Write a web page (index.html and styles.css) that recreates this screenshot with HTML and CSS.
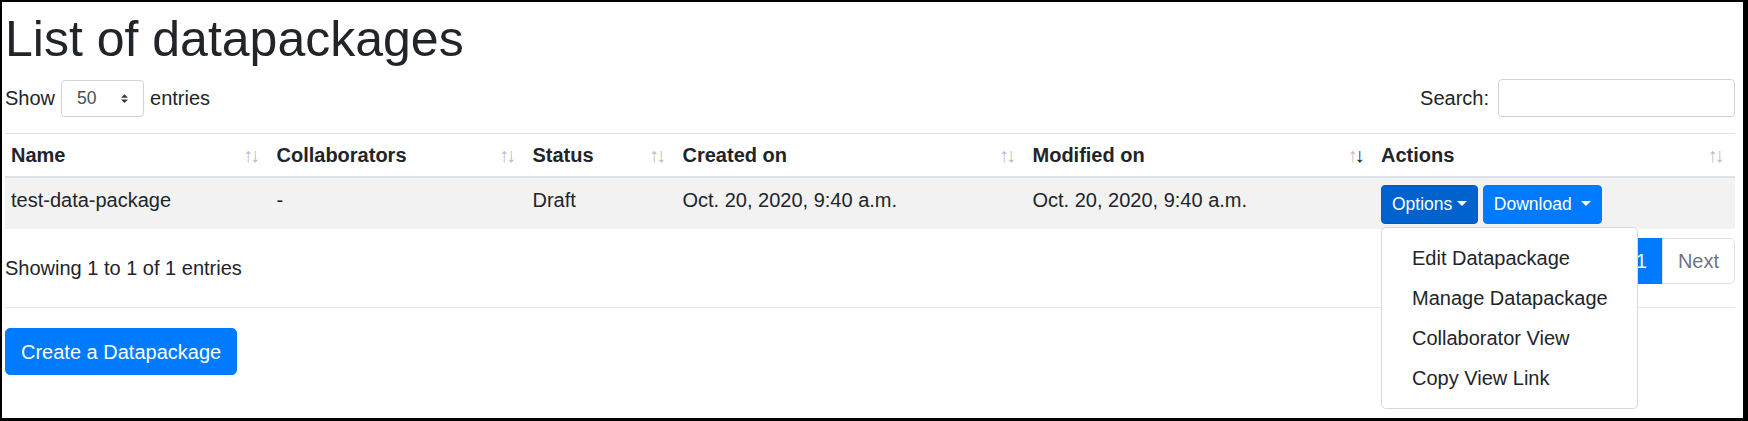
FILE: index.html
```html
<!DOCTYPE html>
<html lang="en">
<head>
<meta charset="utf-8">
<title>List of datapackages</title>
<link rel="stylesheet" href="styles.css">
</head>
<body>
<div class="frame">
  <h1 class="title">List of datapackages</h1>
  <div class="toolbar">
    <div class="length">
      <span>Show</span>
      <span class="select"><span>50</span><svg class="select-icon" width="7" height="9" viewBox="0 0 4 5"><path d="M2 0L0 2h4zm0 5L0 3h4z" fill="#343a40"/></svg></span>
      <span>entries</span>
    </div>
    <div class="filter">
      <span>Search:</span>
      <span class="search"></span>
    </div>
  </div>
  <table class="dt">
    <colgroup>
      <col class="c-name"><col class="c-collab"><col class="c-status"><col class="c-created"><col class="c-modified"><col class="c-actions">
    </colgroup>
    <thead>
      <tr>
        <th><div class="th"><span>Name</span><span class="sort"><span>↑</span><span>↓</span></span></div></th>
        <th><div class="th"><span>Collaborators</span><span class="sort"><span>↑</span><span>↓</span></span></div></th>
        <th><div class="th"><span>Status</span><span class="sort"><span>↑</span><span>↓</span></span></div></th>
        <th><div class="th"><span>Created on</span><span class="sort"><span>↑</span><span>↓</span></span></div></th>
        <th><div class="th"><span>Modified on</span><span class="sort"><span>↑</span><span class="on">↓</span></span></div></th>
        <th><div class="th"><span>Actions</span><span class="sort"><span>↑</span><span>↓</span></span></div></th>
      </tr>
    </thead>
    <tbody>
      <tr>
        <td>test-data-package</td>
        <td>-</td>
        <td>Draft</td>
        <td>Oct. 20, 2020, 9:40 a.m.</td>
        <td>Oct. 20, 2020, 9:40 a.m.</td>
        <td>
          <div class="actions">
            <div class="btn-group">
              <button class="btn btn-sm btn-active">Options<span class="caret"></span></button>
              <div class="menu">
                <a class="menu-item">Edit Datapackage</a>
                <a class="menu-item">Manage Datapackage</a>
                <a class="menu-item">Collaborator View</a>
                <a class="menu-item">Copy View Link</a>
              </div>
            </div>
            <button class="btn btn-sm">Download <span class="caret"></span></button>
          </div>
        </td>
      </tr>
    </tbody>
  </table>
  <div class="footer">
    <div class="info">Showing 1 to 1 of 1 entries</div>
    <ul class="pagination">
      <li class="page-item first disabled"><a class="page-link">Previous</a></li>
      <li class="page-item active"><a class="page-link">1</a></li>
      <li class="page-item last disabled"><a class="page-link">Next</a></li>
    </ul>
  </div>
  <hr class="sep">
  <button class="btn btn-create">Create a Datapackage</button>
</div>
</body>
</html>
```

FILE: styles.css
```css
* { box-sizing: border-box; }
html, body { margin: 0; padding: 0; background: #fff; }
body {
  font-family: "Liberation Sans", Arial, sans-serif;
  font-size: 20px;
  line-height: 30px;
  color: #212529;
}
.frame {
  width: 1748px;
  height: 421px;
  border-style: solid;
  border-color: #000;
  border-width: 2px 5px 3px 2px;
  padding: 7px 8px 0 3px;
  overflow: hidden;
}
.title {
  margin: 0 0 10px;
  font-size: 50px;
  line-height: 60px;
  font-weight: 500;
}
.toolbar {
  display: flex;
  justify-content: space-between;
  align-items: center;
  height: 38px;
  margin: 0 0 16px;
}
.length, .filter { display: flex; align-items: center; }
.select {
  display: flex;
  align-items: center;
  justify-content: space-between;
  width: 83px;
  height: 37px;
  margin: 0 6px;
  padding: 0 15px 0 15px;
  border: 1px solid #ced4da;
  border-radius: 4px;
  font-size: 17.5px;
  color: #495057;
}
.search {
  width: 237px;
  height: 38px;
  margin-left: 9px;
  border: 1px solid #ced4da;
  border-radius: 4px;
}
.dt {
  width: 100%;
  table-layout: fixed;
  border-collapse: separate;
  border-spacing: 0;
}
.c-name { width: 265.5px; }
.c-collab { width: 256px; }
.c-status { width: 150px; }
.c-created { width: 350px; }
.c-modified { width: 348.5px; }
.c-actions { width: 360px; }
.dt th {
  padding: 6px 12px 6px 6px;
  border-top: 1px solid #dee2e6;
  border-bottom: 2px solid #dee2e6;
  text-align: left;
  font-weight: bold;
  vertical-align: bottom;
}
.th {
  display: flex;
  justify-content: space-between;
  align-items: baseline;
}
.sort { display: flex; font-weight: normal; }
.sort span {
  display: flex;
  justify-content: center;
  width: 7px;
  opacity: .3;
}
.sort .on { opacity: 1; }
.dt td {
  padding: 7px 6px 5px;
  background: #f2f2f2;
  vertical-align: top;
}
.actions { display: flex; gap: 5px; align-items: flex-start; }
.btn-group { position: relative; display: flex; }
.btn {
  display: inline-block;
  font-family: inherit;
  color: #fff;
  background: #007bff;
  border: 1px solid #007bff;
  cursor: pointer;
}
.btn-sm {
  font-size: 17.5px;
  line-height: 27px;
  padding: 5px 10px;
  border-radius: 4px;
}
.btn-active { background: #0062cc; border-color: #005cbf; }
.caret {
  display: inline-block;
  margin-left: 4.5px;
  vertical-align: 4.5px;
  border-top: 5.25px solid #fff;
  border-left: 5.25px solid transparent;
  border-right: 5.25px solid transparent;
}
.menu {
  position: absolute;
  top: 100%;
  left: 0;
  z-index: 1000;
  margin-top: 2.5px;
  width: 257px;
  padding: 10px 0;
  background: #fff;
  border: 1px solid rgba(0,0,0,.15);
  border-radius: 5px;
}
.menu-item {
  display: block;
  padding: 5px 30px;
  line-height: 30px;
  white-space: nowrap;
  color: #212529;
}
.footer {
  display: flex;
  justify-content: space-between;
  align-items: flex-start;
  margin-top: 8px;
}
.info { padding-top: 16px; }
.pagination {
  display: flex;
  list-style: none;
  margin: 1px 0 0;
  padding: 0;
}
.page-link {
  display: block;
  padding: 10px 15px;
  line-height: 24px;
  margin-left: -1px;
  border: 1px solid #dee2e6;
  color: #007bff;
  background: #fff;
}
.first .page-link { margin-left: 0; border-radius: 5px 0 0 5px; }
.last .page-link { border-radius: 0 5px 5px 0; }
.disabled .page-link { color: #6c757d; }
.active .page-link { color: #fff; background: #007bff; border-color: #007bff; }
.sep {
  margin: 23px 0 20px;
  height: 0;
  border: 0;
  border-top: 1px solid rgba(0,0,0,.1);
}
.btn-create {
  font-size: 20px;
  line-height: 30px;
  padding: 7.5px 15px;
  border-radius: 5px;
}
```
